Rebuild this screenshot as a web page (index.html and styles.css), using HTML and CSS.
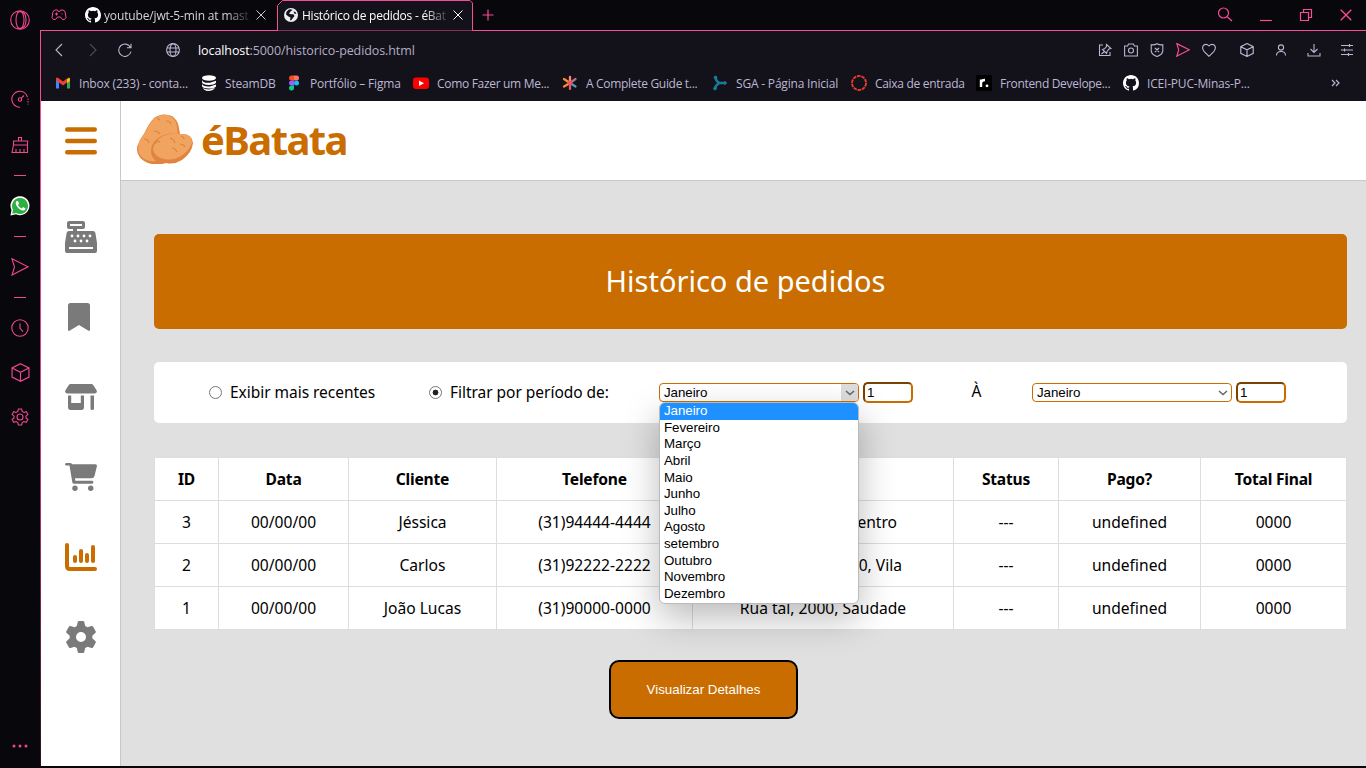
FILE: index.html
```html
<!DOCTYPE html>
<html lang="pt-BR">
<head>
<meta charset="utf-8">
<title>Histórico de pedidos - éBatata</title>
<link rel="stylesheet" href="styles.css">
</head>
<body>
<svg class="defs" width="0" height="0">
  <symbol id="github" viewBox="0 0 16 16"><path fill-rule="evenodd" d="M8 0C3.58 0 0 3.58 0 8c0 3.54 2.29 6.53 5.47 7.59.4.07.55-.17.55-.38 0-.19-.01-.82-.01-1.49-2.01.37-2.53-.49-2.69-.94-.09-.23-.48-.94-.82-1.13-.28-.15-.68-.52-.01-.53.63-.01 1.08.58 1.23.82.72 1.21 1.87.87 2.33.66.07-.52.28-.87.51-1.07-1.78-.2-3.64-.89-3.64-3.95 0-.87.31-1.59.82-2.15-.08-.2-.36-1.02.08-2.12 0 0 .67-.21 2.2.82a7.6 7.6 0 0 1 4 0c1.53-1.04 2.2-.82 2.2-.82.44 1.1.16 1.92.08 2.12.51.56.82 1.27.82 2.15 0 3.07-1.87 3.75-3.65 3.95.29.25.54.73.54 1.48 0 1.07-.01 1.93-.01 2.2 0 .21.15.46.55.38A8.01 8.01 0 0 0 16 8c0-4.42-3.58-8-8-8z"/></symbol>
  <symbol id="close" viewBox="0 0 12 12"><path d="M1.500 1.500l9 9M10.500 1.500l-9 9"/></symbol>
  <symbol id="plane" viewBox="0 0 18 18"><path d="M1 .8L17 8.800 1 17 3.500 9z"/></symbol>
  <symbol id="cube" viewBox="0 0 18 18"><path d="M9 .7l8 4v8.600l-8 4-8-4V4.700zM1 4.700l8 4.100 8-4.100M9 8.800v8.500"/></symbol>
  <symbol id="chev" viewBox="0 0 10 6"><path d="M1 1l4 3.600L9 1"/></symbol>
</svg>
<div class="browser">
  <aside class="rail">
    <svg viewBox="0 0 20 20" width="20" height="20"><circle cx="10" cy="10" r="9.300"/><ellipse cx="10" cy="10" rx="4" ry="8.800"/><path d="M7 2Q16 0 16 10T7 18"/></svg>
    <i></i>
    <svg viewBox="0 0 18 18" width="18" height="18"><path d="M9 17.200A8 8 0 1 1 16.500 7"/><path d="M17 8.500v6" stroke-dasharray="1.300 1.300"/><circle cx="9" cy="9.500" r="1.700"/><path d="M10.200 8.300L13 5.500"/></svg>
    <svg viewBox="0 0 18 18" width="18" height="18"><path d="M7.500 5V1.500h3V5M2.500 5h14v4h-14zM2.500 9L1 16.500h15.500V9M5 16v-3M9 16v-3M13 16v-3"/></svg>
    <b></b>
    <svg class="wa" viewBox="0 0 20 20" width="20" height="20"><path fill="#fff" d="M.5 19.500l1-5.500A9.500 9.500 0 1 1 6 18.300z"/><path fill="#2fae42" d="M2.200 17.800l.8-4A8 8 0 1 1 6.200 17z"/><path fill="#fff" d="M6.500 5c-3 3 3 10 7.300 9.500 1.500-.3 1.700-1.600 1.500-2.200l-2.300-1.200-1.200 1.300c-2-.7-3-2-3.700-3.400L9 7.800 8 5z"/></svg>
    <b></b>
    <svg viewBox="0 0 18 18" width="18" height="18"><use href="#plane"/></svg>
    <b></b>
    <svg viewBox="0 0 18 18" width="18" height="18"><circle cx="9" cy="9" r="8.200"/><path d="M9 4.500v4.800l3 3.300"/></svg>
    <svg viewBox="0 0 18 18" width="19" height="19"><use href="#cube"/></svg>
    <svg viewBox="0 0 18 18" width="18" height="18"><circle cx="9" cy="9" r="3"/><path d="M7.400 1h3.200l.6 2.500 1.700 1 2.400-.8 1.600 2.800L15 8.200v1.700l1.900 1.600-1.600 2.800-2.400-.8-1.700 1-.6 2.500H7.400l-.6-2.500-1.700-1-2.400.8-1.600-2.800L3 9.900V8.200L1.100 6.500l1.600-2.800 2.400.8 1.700-1z"/></svg>
    <i></i>
    <svg class="dots" viewBox="0 0 18 4" width="18" height="4"><circle cx="3" cy="2" r="1.500"/><circle cx="9" cy="2" r="1.500"/><circle cx="15" cy="2" r="1.500"/></svg>
  </aside>

  <div class="window">
    <div class="tabs">
      <div class="pad-icon"><svg viewBox="0 0 16 12" width="16" height="12"><path d="M4 1h2.500l.8 1.500h1.400L9.500 1H12l2 1.500 1 6-1.500 2h-2L9.500 8h-3l-2 2.500h-2L1 8.500l1-6zM4 5h3M5.500 3.500v3M10.500 5h1"/></svg></div>
      <div class="tab idle"><svg class="white" width="16" height="16"><use href="#github"/></svg><span class="tab-text">youtube/jwt-5-min at mast</span><svg class="x" width="12" height="12"><use href="#close"/></svg></div>
      <div class="tab active">
        <svg class="tab-shape" viewBox="0 0 198 31" width="198" height="31"><path d="M0 30.500H1.500V5.500L6.500.5H194L196.500 3V30.500H198" fill="#13111a"/></svg>
        <svg class="globe" viewBox="0 0 14 14" width="14" height="14"><circle cx="7" cy="7" r="7" fill="#eeedf2"/><path fill="#13111a" d="M4.500 1.800Q7 .8 8.500 2L6.500 3.500 5 5.500l2 .8h2.500l1 1.700-2 2.500-1.500 2-1-.5.5-2.500-2-1L2 6.500Q2 3.500 4.500 1.800zM9.500 3.500l2 .5.800 2-2-.5z"/></svg>
        <span class="tab-text">Histórico de pedidos - éBat</span><svg class="x" width="12" height="12"><use href="#close"/></svg>
      </div>
      <svg class="plus" viewBox="0 0 12 12" width="12" height="12"><path d="M6 .5v11M.5 6h11"/></svg>
      <div class="controls">
        <svg viewBox="0 0 16 16" width="16" height="16"><circle cx="6.500" cy="6" r="5"/><path d="M10.200 9.700l4.800 4.300"/></svg>
        <svg viewBox="0 0 14 14" width="14" height="14"><path d="M1 12.500h12"/></svg>
        <svg viewBox="0 0 14 14" width="14" height="14"><path d="M1.500 4.500h8v8h-8zM4.500 4.500v-3h8v8h-3"/></svg>
        <svg viewBox="0 0 12 12" width="14" height="14"><use href="#close"/></svg>
      </div>
    </div>

    <div class="toolbar">
      <svg class="nav-back" viewBox="0 0 8 14" width="8" height="14"><path d="M7 1L1 7l6 6"/></svg>
      <svg class="nav-next" viewBox="0 0 8 14" width="8" height="14"><path d="M1 1l6 6-6 6"/></svg>
      <svg class="nav-reload" viewBox="0 0 14 14" width="14" height="14"><path d="M12.500 4.500A6.200 6.200 0 1 0 13 8.500M13 .8V4.800H9"/></svg>
      <svg class="nav-web" viewBox="0 0 14 14" width="14" height="14"><circle cx="7" cy="7" r="6.400"/><ellipse cx="7" cy="7" rx="3" ry="6.400"/><path d="M1 5h12M1 9h12"/></svg>
      <span class="url"><em>localhost</em>:5000/historico-pedidos.html</span>
      <div class="tools">
        <svg viewBox="0 0 14 14" width="14" height="14"><path d="M5 2H1.500v10.500h10.500V9M8.500 1.500l4.500 4-2 .5-2 2.500-.5 2-4-4 2-.7 2-2.300zM6.500 8.500L3.500 11"/></svg>
        <svg viewBox="0 0 14 14" width="14" height="14"><path d="M.6 3h3L4.600 1h4.800l1 2h3v10H.6z"/><circle cx="7" cy="7.500" r="2.500"/></svg>
        <svg viewBox="0 0 14 14" width="14" height="14"><path d="M7 .7q3 1.500 5.800 1v6.500Q12 12 7 13.500 2 12 1.200 8.200V1.700Q4 2.200 7 .7zM5 5l4 4M9 5L5 9"/></svg>
        <svg class="pink" viewBox="0 0 18 18" width="14" height="14"><use href="#plane"/></svg>
        <svg viewBox="0 0 14 14" width="14" height="14"><path d="M7 13.300L2 8.300Q-.5 4.800 1.500 2.300 4.500 0 7 3q2.500-3 5.500-.7 2 2.500-.5 6z"/></svg>
        <svg class="box" viewBox="0 0 18 18" width="14" height="14"><use href="#cube"/></svg>
        <svg viewBox="0 0 14 14" width="14" height="14"><circle cx="7" cy="4.500" r="2.600"/><path d="M2.500 12.500q0-4 4.500-4t4.500 4"/></svg>
        <svg viewBox="0 0 14 14" width="14" height="14"><path d="M7 1v8.500M3.500 6L7 9.500 10.500 6M1 10v3h12v-3"/></svg>
        <svg viewBox="0 0 14 14" width="14" height="14"><path d="M1 2.500h12M1 7h12M1 11.500h12M9.500 1v3M4.500 5.500v3M8.500 10v3"/></svg>
      </div>
    </div>

    <div class="bookmarks">
      <a><svg viewBox="0 0 16 16" width="16" height="16"><path fill="#4285f4" d="M1 4v9.500h3V7z"/><path fill="#34a853" d="M12 7v6.500h3V4z"/><path fill="#fbbc04" d="M12 4l2-1.500 1 1V6l-3 2z"/><path fill="#ea4335" d="M1 3l1.500-.5L8 6.500 12 3.500V7.500L8 10.500 1 5.300z"/></svg>Inbox (233) - conta...</a>
      <a><svg viewBox="0 0 16 16" width="16" height="16"><g fill="#fff"><ellipse cx="8" cy="3" rx="7" ry="2.700"/><path d="M1 4.500q0 3.700 8 3.300l6-2v2q-2 2.200-7 2.200Q1 9.500 1 7zM1 8.700q1 3.300 8 2.700l6-2v2q-2 2-7 2-7-.5-7-2.500zM2 13q2 1.700 7 1.300l5-1.300q-2 3-7 3-4-.5-5-3z"/></g></svg>SteamDB</a>
      <a class="figma"><svg viewBox="0 0 12 16" width="12" height="16"><path fill="#f24e1e" d="M6 .5H3.500a2.500 2.500 0 0 0 0 5H6z"/><path fill="#ff7262" d="M6 .5h2.500a2.500 2.500 0 0 1 0 5H6z"/><path fill="#a259ff" d="M6 5.500H3.500a2.500 2.500 0 0 0 0 5H6z"/><circle cx="8.500" cy="8" r="2.500" fill="#1abcfe"/><path fill="#0acf83" d="M6 10.500H3.500A2.500 2.500 0 1 0 6 13z"/></svg>Portfólio – Figma</a>
      <a class="tight"><svg viewBox="0 0 16 16" width="16" height="16"><rect y="2.500" width="16" height="11.500" rx="3" fill="#f00"/><path fill="#fff" d="M6 5.500l5 2.700-5 2.800z"/></svg>Como Fazer um Me...</a>
      <a class="tight"><svg viewBox="0 0 16 16" width="16" height="16" stroke-width="2.300" stroke-linecap="round"><path stroke="#f87" d="M8 8V2"/><path stroke="#ff8a2a" d="M8 8L2 4M8 8l-6 3.500"/><path stroke="#e65568" d="M8 8v6"/><path stroke="#bb6d85" d="M8 8l5.500-4"/><path stroke="#4da0aa" d="M8 8l5.500 3.500"/><circle cx="8" cy="8" r="1" fill="#e65568" stroke="#e65568"/></svg>A Complete Guide t...</a>
      <a><svg viewBox="0 0 16 16" width="16" height="16" fill="#187b99" stroke="#187b99"><path stroke-width="2.500" fill="none" d="M3.500 2.500Q4.500 7 7.500 8H13M7.500 8Q3.500 10 3 13.500"/><circle cx="3.500" cy="2.500" r="1.400"/><circle cx="13" cy="8" r="1.300"/><circle cx="3" cy="13.500" r="1.400"/></svg>SGA - Página Inicial</a>
      <a class="tight"><svg viewBox="0 0 16 16" width="16" height="16" fill="none"><circle cx="8" cy="8" r="7" stroke="#e63b2e" stroke-width="1.900" stroke-dasharray="3.600 .8"/></svg>Caixa de entrada</a>
      <a class="roadmap tight"><svg viewBox="0 0 16 16" width="16" height="16"><rect width="16" height="16" rx="1" fill="#000"/><path d="M5 12V4.500M5 8q0-3 4-3" fill="none" stroke="#fff" stroke-width="2.400"/><circle cx="11" cy="10.800" r="1.400" fill="#fff"/></svg>Frontend Develope...</a>
      <a><svg class="white" width="16" height="16"><use href="#github"/></svg>ICEI-PUC-Minas-P...</a>
      <svg class="more" viewBox="0 0 9 8" width="9" height="8"><path d="M1 1l3 3-3 3M5 1l3 3-3 3"/></svg>
    </div>

    <div class="page">
      <nav class="side">
        <svg class="on" viewBox="0 0 32 28" width="32" height="28"><path d="M2.300 2.500h27.400M2.300 14h27.400M2.300 25.200h27.400" stroke="#c96d00" stroke-width="4.600" stroke-linecap="round"/></svg>
        <i></i>
        <svg viewBox="0 0 32 32" width="32" height="32"><path fill-rule="evenodd" d="M4 0h14a2 2 0 0 1 2 2v4a2 2 0 0 1-2 2h-6v2h16q2 0 2.400 2L32 22v8a2 2 0 0 1-2 2H2a2 2 0 0 1-2-2v-8l1.600-10Q2 10 4 10h4V8H4a2 2 0 0 1-2-2V2a2 2 0 0 1 2-2zm1 3v2h12V3zM4 26v2h24v-2z"/><g fill="#fff"><circle cx="7" cy="15" r="1.400"/><circle cx="13" cy="15" r="1.400"/><circle cx="19" cy="15" r="1.400"/><circle cx="25" cy="15" r="1.400"/><circle cx="10" cy="20" r="1.400"/><circle cx="16" cy="20" r="1.400"/><circle cx="22" cy="20" r="1.400"/></g></svg>
        <svg class="mark" viewBox="0 0 22 28" width="22" height="28"><path d="M2.500 0h17A2.500 2.500 0 0 1 22 2.500v24.300q0 1.500-1.500 1L11 22l-9.500 5.800q-1.500.5-1.500-1V2.500A2.500 2.500 0 0 1 2.500 0z"/></svg>
        <svg viewBox="0 0 32 26" width="32" height="26"><path d="M5.500 0h21q1 0 1.700 1l3.500 5.500Q32.500 9 30 9.500H2Q-.5 9 .3 6.500L3.800 1q.7-1 1.700-1zM3 11.500h3.200V19h9.600v-7.500H19V23q0 3-2.500 3h-11Q3 26 3 23zM25.500 11.500H29V24.500q0 1.500-1.800 1.500t-1.700-1.500z"/></svg>
        <svg viewBox="0 0 32 28" width="32" height="28"><path fill-rule="evenodd" d="M1.200 0h4Q6.500 0 7 1.300h23.500q1.800.2 1.400 2L29.500 13q-.5 2.300-3 2.300H10l.4 2.500h16.800q1.200.2 1.200 1.500t-1.200 1.500H9q-1.400 0-1.700-1.500L4.500 2.600H1.200Q0 2.400 0 1.300T1.200 0z"/><circle cx="10" cy="25.300" r="2.700"/><circle cx="25.700" cy="25.300" r="2.700"/></svg>
        <svg viewBox="0 0 32 28" width="32" height="28"><g fill="none" stroke="#c96d00" stroke-width="4" stroke-linecap="round"><path d="M2 2v21q0 3 3 3h25M10 14v4M16 8v10M22 12v6M28 4v14"/></g></svg>
        <svg viewBox="0 0 32 32" width="32" height="32"><path fill-rule="evenodd" d="M12.800.8Q13 0 14 0h4q1 0 1.200.8l1 4.200 2.300 1.300 4-1.300q1-.3 1.500.5l2.700 4.700q.5 1-.2 1.600L27.300 14.700v2.600l3.200 2.900q.7.600.2 1.600L28 26.500q-.5.800-1.500.5l-4-1.300-2.300 1.300-1 4.200Q19 32 18 32h-4q-1 0-1.200-.8l-1-4.200-2.300-1.300-4 1.300q-1 .3-1.500-.5l-2.700-4.700q-.5-1 .2-1.600l3.200-2.900v-2.600L1.500 11.800q-.7-.6-.2-1.600L4 5.500q.5-.8 1.500-.5l4 1.300L11.800 5zM16 11a5 5 0 1 0 0 10 5 5 0 0 0 0-10z"/></svg>
      </nav>
      <div class="content">
        <header class="brand">
          <svg viewBox="0 0 56 50" width="56" height="50"><path fill="#e1843f" d="M17 4Q25-2 35 2q6 4 7 12l1 6q12-1 13 9-1 10-11 17-8 5-16 3-9 3-18 0Q-1 44 0 33q2-7 7-13 5-11 10-16z"/><path fill="#f0a460" d="M18 4q9-6 17-1 5 4 5 11l1 6q-11-2-18 3-9 5-9 14 0 6 5 10Q8 48 3 41-1 35 3 26q2-4 6-9 4-9 9-13z"/><path fill="#f0a460" d="M26 22q7-3 15-2 14-1 14 9-3 8-11 13-8 5-17 3-9-2-11-9 0-8 10-14z"/><path fill="none" stroke="#e1843f" stroke-width="1.200" d="M17 17q4 0 6 3M7 25q4 0 5 4M20 4l3 2M29 7q4 0 5 3M33 24q4 1 5 5M23 28q-3-2-5 2M44 22q3 1 3 3M43 30q3 0 5 3M35 34q3 0 5 4"/></svg>
          <strong>éBatata</strong>
        </header>
        <main>
          <h1>Histórico de pedidos</h1>
          <form class="filter">
            <label class="recent"><span class="radio"></span>Exibir mais recentes</label>
            <label class="period"><span class="radio checked"></span>Filtrar por período de:</label>
            <div class="select open">Janeiro<span class="arrow"><svg width="10" height="6"><use href="#chev"/></svg></span>
              <ul class="menu"><li class="sel">Janeiro</li><li>Fevereiro</li><li>Março</li><li>Abril</li><li>Maio</li><li>Junho</li><li>Julho</li><li>Agosto</li><li>setembro</li><li>Outubro</li><li>Novembro</li><li>Dezembro</li></ul>
            </div>
            <div class="num">1</div>
            <span class="to">À</span>
            <div class="select">Janeiro<span class="arrow"><svg width="10" height="6"><use href="#chev"/></svg></span></div>
            <div class="num">1</div>
          </form>
          <table>
            <colgroup><col class="c1"><col class="c2"><col class="c3"><col class="c4"><col class="c5"><col class="c6"><col class="c7"><col class="c8"></colgroup>
            <tr><th>ID</th><th>Data</th><th>Cliente</th><th>Telefone</th><th></th><th>Status</th><th>Pago?</th><th>Total Final</th></tr>
            <tr><td>3</td><td>00/00/00</td><td>Jéssica</td><td>(31)94444-4444</td><td class="r1">entro</td><td>---</td><td>undefined</td><td>0000</td></tr>
            <tr><td>2</td><td>00/00/00</td><td>Carlos</td><td>(31)92222-2222</td><td class="r2">0, Vila</td><td>---</td><td>undefined</td><td>0000</td></tr>
            <tr><td>1</td><td>00/00/00</td><td>João Lucas</td><td>(31)90000-0000</td><td>Rua tal, 2000, Saudade</td><td>---</td><td>undefined</td><td>0000</td></tr>
          </table>
          <button type="button">Visualizar Detalhes</button>
        </main>
      </div>
    </div>
  </div>
</div>
</body>
</html>
```
FILE: styles.css
```css
* { box-sizing: border-box; }
body { margin: 0; background: #000; overflow: hidden; }
svg { display: block; flex: none; }
.defs { position: absolute; }
.browser { width: 1366px; height: 768px; display: grid; grid-template-columns: 40px 1fr; background: #08070c; font-family: "Open Sans", "Noto Sans", sans-serif; }

.rail { display: grid; grid-template-rows: 40px 39px 40px 52px 8px 53px 8px 54px 7px 53px 36px 54px 1fr 44px; place-items: center; fill: none; stroke: #f0488f; stroke-width: 1.1; }
.rail b { width: 12px; height: 1px; background: #f0488f; }
.rail .wa { stroke: none; }
.rail .dots { stroke: none; fill: #f0488f; }

.window { display: flex; flex-direction: column; min-width: 0; height: 766px; }
.tabs { height: 31px; display: flex; align-items: center; border-bottom: 1px solid #fa4b98; fill: none; stroke: #fa4b98; }
.pad-icon { width: 45px; padding-left: 11px; }
.white { fill: #fff; stroke: none; }
.tab { display: flex; align-items: center; font-size: 12px; height: 31px; }
.tab-text { white-space: nowrap; -webkit-mask-image: linear-gradient(90deg, #000 84%, rgba(0,0,0,.15)); mask-image: linear-gradient(90deg, #000 84%, rgba(0,0,0,.15)); }
.idle { width: 191px; color: #d5d3da; }
.idle .tab-text { width: 145px; margin: 0 6px 0 3px; letter-spacing: -.15px; }
.x { stroke: #c9c7d0; }
.active { position: relative; width: 198px; color: #fff; padding-left: 8px; }
.active .tab-text { width: 145px; margin: 0 5px 0 4px; position: relative; letter-spacing: -.25px; }
.active .x, .globe { position: relative; stroke: #fff; }
.active .globe { stroke: none; }
.tab-shape { position: absolute; left: 0; top: 0; }
.plus { margin-left: 8px; stroke-width: 1.2; }
.controls { margin-left: auto; display: flex; align-items: center; gap: 26px; padding-right: 13px; stroke-width: 1.2; }

.toolbar { height: 40px; display: flex; align-items: center; background: #13111a; border-left: 1px solid #fa4b98; padding-bottom: 2px; fill: none; stroke: #bbb5cf; stroke-width: 1.1; }
.nav-back { margin-left: 14px; }
.nav-next { margin-left: 26px; opacity: .35; }
.nav-reload { margin-left: 21px; }
.nav-web { margin-left: 34px; }
.url { margin-left: 18px; color: #b3aec4; font-size: 12.5px; letter-spacing: -.09px; }
.url em { font-style: normal; color: #fff; }
.tools { margin-left: auto; display: grid; grid-template-columns: 26px 26px 26px 26px 38px 34px 33px 33px 14px; align-items: center; padding-right: 12px; }
.pink { stroke: #fa4b98; stroke-width: 1.5; }
.box { stroke-width: 1.5; }

.bookmarks { height: 30px; flex: none; display: grid; grid-template-columns: 146px 87px 125px 149px 150px 139px 126px 146px 1fr 9px; align-items: center; background: #13111a; border-left: 1px solid #fa4b98; padding: 0 26px 6px 14px; color: #bdb7d2; font-size: 12px; letter-spacing: -.19px; }
.bookmarks a { display: flex; align-items: center; gap: 8px; white-space: nowrap; }
.bookmarks .tight { letter-spacing: -.31px; }
.bookmarks .roadmap { gap: 7px; padding-left: 0; margin-left: -1px; gap: 8px; }
.bookmarks .figma { gap: 10px; }
.more { fill: none; stroke: #bbb5cf; stroke-width: 1.2; }

.page { flex: 1; display: grid; grid-template-columns: 80px 1fr; background: #e0e0e0; border-left: 1px solid; border-image: linear-gradient(#fa4b98, #d33d82 50%, #2b1020) 1; min-height: 0; }
.side { background: #fff; border-right: 1px solid #c8c8c8; display: grid; grid-template-rows: 80px 16px repeat(6, 80px); place-items: center; fill: #7a7a7a; padding-left: 1px; align-content: start; }
.side .mark { margin-right: 4px; }
.content { min-width: 0; font-family: "Noto Sans", "Open Sans", sans-serif; }
.brand { height: 80px; background: #fff; border-bottom: 1px solid #c8c8c8; display: flex; align-items: center; padding: 0 0 3px 16px; gap: 8px; color: #c96d00; }
.brand strong { font-size: 40px; line-height: 50px; padding-top: 1px; font-weight: 700; letter-spacing: -1.600px; }
main { padding: 53px 19px 0 33px; }
h1 { margin: 0; height: 95px; line-height: 93px; border-radius: 5px; background: #c96d00; color: #fff; text-align: center; font-weight: 400; font-size: 29px; padding-right: 10px; }
.filter { margin: 33px 0 34px; height: 61px; border-radius: 5px; background: #fff; display: flex; align-items: center; padding-left: 55px; color: #000; font-size: 15.500px; }
.filter label { display: flex; align-items: center; gap: 8px; white-space: nowrap; letter-spacing: -.03px; line-height: 20px; padding-bottom: 1px; }
.recent { width: 220px; }
.period { width: 230px; }
.radio { width: 13px; height: 13px; border: 1px solid #767676; border-radius: 50%; background: #fff; }
.checked { background: radial-gradient(circle, #222 0 2.600px, #fff 3.200px); }
.select { position: relative; width: 200px; height: 19px; border: 1px solid #c96d00; border-radius: 4px; background: #fff; font: 13.333px/17px "Liberation Sans", Arial, sans-serif; letter-spacing: -.06px; padding-left: 4px; }
.arrow { position: absolute; right: 0; top: 0; width: 17px; height: 17px; display: grid; place-items: center; fill: none; stroke: #666; stroke-width: 1.5; border-radius: 0 3px 3px 0; }
.open .arrow { background: #ddd; }
.num { margin-left: 4px; width: 50px; height: 21px; border: 2px solid; border-color: #7a4200 #c96d00 #c96d00 #7a4200; border-radius: 5px; font: 13.333px/17px "Liberation Sans", Arial, sans-serif; padding-left: 2px; }
.to { width: 119px; text-align: center; padding: 0 0 3px 8px; }
.menu { position: absolute; z-index: 2; left: -1px; top: 18px; width: 200px; height: 202px; margin: 0; padding: 0; list-style: none; background: #fff; border: 1px solid #bbb; border-radius: 6px; overflow: hidden; box-shadow: 0 14px 36px rgba(0,0,0,.27); line-height: 16.640px; }
.menu li { height: 16.640px; padding-left: 4px; }
.menu .sel { background: #1e90ff; color: #fff; }

table { border-collapse: collapse; table-layout: fixed; width: 1193px; background: #fff; font-size: 15.600px; line-height: 22px; }
.c1 { width: 64px; } .c2 { width: 130px; } .c3 { width: 148px; } .c4 { width: 196px; } .c5 { width: 261px; } .c6 { width: 105px; } .c7 { width: 142px; } .c8 { width: 146px; }
th, td { border: 1px solid #ddd; height: 43px; padding: 0; text-align: center; color: #000; white-space: nowrap; }
th { font-weight: 700; letter-spacing: -.2px; }
td.r1 { text-align: right; padding-right: 56px; }
td.r2 { text-align: right; padding-right: 51px; }
button { display: block; margin: 30px 0 0 455px; width: 189px; height: 59px; border: 2px solid #000; border-radius: 10px; background: #c96d00; color: #fff; font: 13.333px "Liberation Sans", Arial, sans-serif; }
```
